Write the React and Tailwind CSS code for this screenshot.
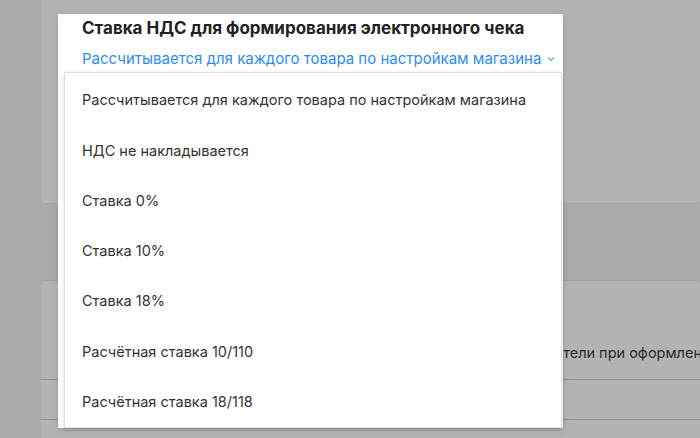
const options = [
  'Рассчитывается для каждого товара по настройкам магазина',
  'НДС не накладывается',
  'Ставка 0%',
  'Ставка 10%',
  'Ставка 18%',
  'Расчётная ставка 10/110',
  'Расчётная ставка 18/118',
];

export default function App() {
  return (
    <div className="relative w-[700px] h-[438px] overflow-hidden bg-[#a9aaac] text-[#333] font-['Inter','Liberation_Sans',sans-serif]">
      {/* dimmed page behind */}
      <div className="pl-[41px] flex flex-col">
        <div className="h-[204px] bg-[#b3b3b3] rounded-b-[4px] border-b border-[#a2a4a7]" />
        <div className="mt-[76px] h-[200px] bg-[#b3b3b3] rounded-t-[4px] border-t border-[#a2a4a7]">
          <div className="pt-[62px] pl-[74px] text-[14.5px] leading-[20px] text-[#2a2a2a] whitespace-nowrap">
            Отправлять чек на email или телефон, которые указали покупатели при оформлении заказа
          </div>
          <div className="mt-[16px] border-t border-[#8f9398]" />
          <div className="mt-[39px] border-t border-[#8f9398]" />
        </div>
      </div>

      {/* popover */}
      <div className="absolute left-[58px] top-[14px] w-[505px] bg-white pt-[4px] shadow-[0_2px_6px_rgba(0,0,0,0.15)]">
        <div className="pl-[24px] text-[17px] leading-[20px] font-bold text-[#222]">
          Ставка НДС для формирования электронного чека
        </div>
        <div className="mt-[11px] pl-[24px] flex items-center gap-[6px] text-[15px] leading-[20px] text-[#2b8cf5]">
          <span>Рассчитывается для каждого товара по настройкам магазина</span>
          <svg width="8" height="6" viewBox="0 0 8 6" fill="none">
            <polyline points="1,1.5 4,4.5 7,1.5" stroke="#6aaef7" strokeWidth="1.3" />
          </svg>
        </div>
        <div className="mt-[3px] ml-[6px] mr-[1px] border border-[#dadde2] bg-white pt-[2px] shadow-[0_1px_4px_rgba(0,0,0,0.12)]">
          {options.map((o) => (
            <div key={o} className="h-[50.3px] flex items-center pl-[17px] text-[14.5px] text-[#333]">
              {o}
            </div>
          ))}
        </div>
      </div>
    </div>
  );
}
